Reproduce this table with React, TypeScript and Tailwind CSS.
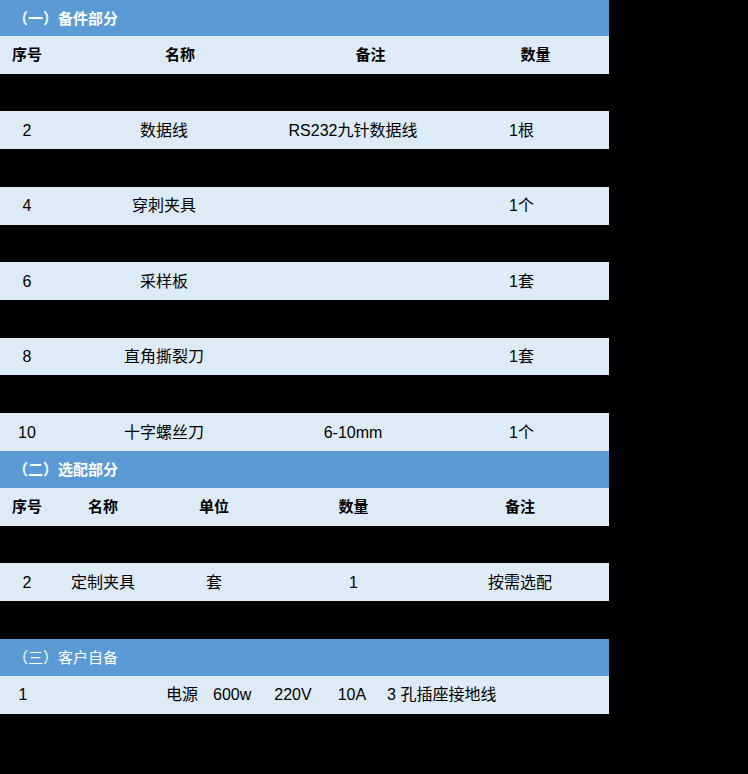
import React from "react";

const font = { fontFamily: '"Liberation Sans", "Noto Sans CJK SC", sans-serif' };

function Heading({ text, bold = true }: { text: string; bold?: boolean }) {
  return (
    <div
      className={`h-[37px] bg-[#5b9bd5] flex items-center pl-[13px] pt-[2px] text-white text-[15px] ${bold ? "font-bold" : "font-normal"}`}
    >
      {text}
    </div>
  );
}

function Black() {
  return <div className="h-[37.72px] bg-black" />;
}

function Row1({ a, b, c, d, head = false }: { a: string; b: string; c: string; d: string; head?: boolean }) {
  return (
    <div className={`h-[37.72px] bg-[#ddebf7] grid grid-cols-[54px_252px_128px_175px] items-center text-black whitespace-nowrap ${head ? "font-bold text-[15px]" : "text-[16px] pt-[1px]"}`}>
      <div className="flex justify-center">{a}</div>
      <div className={`flex justify-center ${head ? "" : "pr-[32px]"}`}>{b}</div>
      <div className={`flex justify-center ${head ? "pl-[1px]" : "pr-[34px]"}`}>{c}</div>
      <div className={`flex justify-center ${head ? "pl-[28px]" : ""}`}>{d}</div>
    </div>
  );
}

function Row2({ a, b, c, d, e, head = false }: { a: string; b: string; c: string; d: string; e: string; head?: boolean }) {
  return (
    <div className={`h-[37.72px] bg-[#ddebf7] grid grid-cols-[54px_98px_124px_155px_178px] items-center text-black whitespace-nowrap ${head ? "font-bold text-[15px]" : "text-[16px] pt-[1px]"}`}>
      <div className="flex justify-center">{a}</div>
      <div className="flex justify-center">{b}</div>
      <div className="flex justify-center">{c}</div>
      <div className="flex justify-center">{d}</div>
      <div className="flex justify-center">{e}</div>
    </div>
  );
}

export default function App() {
  return (
    <div className="w-full min-h-[774px] bg-black" style={font}>
      <div className="w-[609px] flex flex-col">
        <div className="h-[36px] bg-[#5b9bd5] flex items-center pl-[13px] pt-[2px] text-white text-[15px] font-bold">（一）备件部分</div>
        <Row1 a="序号" b="名称" c="备注" d="数量" head />
        <Black />
        <Row1 a="2" b="数据线" c="RS232九针数据线" d="1根" />
        <Black />
        <Row1 a="4" b="穿刺夹具" c="" d="1个" />
        <Black />
        <Row1 a="6" b="采样板" c="" d="1套" />
        <Black />
        <Row1 a="8" b="直角撕裂刀" c="" d="1套" />
        <Black />
        <Row1 a="10" b="十字螺丝刀" c="6-10mm" d="1个" />
        <Heading text="（二）选配部分" />
        <Row2 a="序号" b="名称" c="单位" d="数量" e="备注" head />
        <Black />
        <Row2 a="2" b="定制夹具" c="套" d="1" e="按需选配" />
        <Black />
        <Heading text="（三）客户自备" bold={false} />
        <div className="h-[37.72px] bg-[#ddebf7] flex items-center text-[16px] pt-[1px] text-black whitespace-nowrap">
          <span className="w-[54px] text-center pr-[8px]">1</span>
          <span className="ml-[112px]">电源</span>
          <span className="ml-[15px]">600w</span>
          <span className="ml-[23px]">220V</span>
          <span className="ml-[26px]">10A</span>
          <span className="ml-[21px]">3 孔插座接地线</span>
        </div>
      </div>
    </div>
  );
}
